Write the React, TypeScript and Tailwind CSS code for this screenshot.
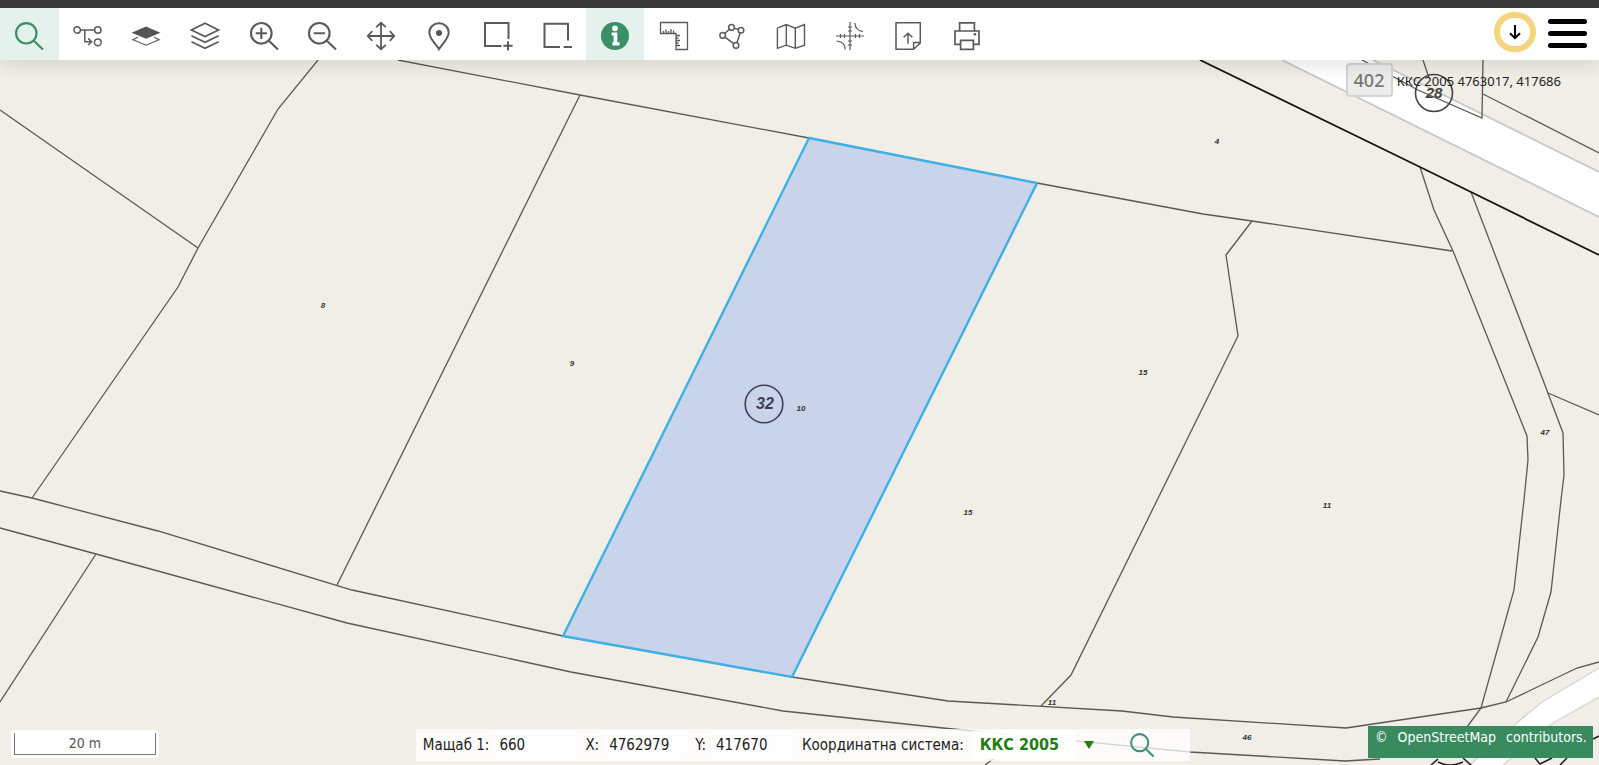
import { useState } from "react";
import type { ReactNode } from "react";

type Tool = { name: string; active?: boolean; icon: ReactNode };

const tools: Tool[] = [
  {
    name: "Търсене",
    active: true,
    icon: (
      <g stroke="#3a8f66" strokeWidth="2.2">
        <circle cx="11.3" cy="11.3" r="10.2" />
        <path d="M18.5 18.5 28 27.5" />
      </g>
    ),
  },
  {
    name: "Маршрут",
    icon: (
      <g strokeWidth="1.5">
        <circle cx="3.2" cy="8" r="3.2" />
        <circle cx="23.8" cy="8" r="3.2" />
        <circle cx="23.8" cy="20.3" r="3.4" />
        <path d="M6.5 8H20.5M10.8 8V19.7H17.6M14.2 16.4l3.4 3.3-3.4 3.3" />
      </g>
    ),
  },
  {
    name: "Основен слой",
    icon: (
      <g>
        <path d="M14 4.5 28.4 10.7 14 16.8-.4 10.7Z" fill="#555" stroke="none" />
        <path d="M6 15.3.9 17.8 14 23.2 27.1 17.8 22 15.3" strokeWidth="1.2" />
      </g>
    ),
  },
  {
    name: "Слоеве",
    icon: (
      <path
        d="M14 1.3 27.6 8 14 14.6.4 8ZM.4 13.7 14 20.2 27.6 13.7M.4 19.7 14 26.3 27.6 19.7"
        strokeWidth="1.7"
      />
    ),
  },
  {
    name: "Приближаване",
    icon: (
      <path
        d="M21.6 11.3a10.3 10.3 0 1 1-20.6 0 10.3 10.3 0 1 1 20.6 0ZM18.6 18.6 28 27.5M5.7 11.3H16.9M11.3 5.7V16.9"
        strokeWidth="2.1"
      />
    ),
  },
  {
    name: "Отдалечаване",
    icon: (
      <path
        d="M21.6 11.3a10.3 10.3 0 1 1-20.6 0 10.3 10.3 0 1 1 20.6 0ZM18.6 18.6 28 27.5M5.7 11.3H16.9"
        strokeWidth="2.1"
      />
    ),
  },
  {
    name: "Преместване",
    icon: (
      <path
        d="M14 .8V27.2M.8 14H27.2M9.2 5.2 14 .8l4.8 4.4M9.2 22.8 14 27.2l4.8-4.4M5.2 9.2.8 14l4.4 4.8M22.8 9.2 27.2 14l-4.4 4.8"
        strokeWidth="1.8"
      />
    ),
  },
  {
    name: "Местоположение",
    icon: (
      <g strokeWidth="2">
        <path d="M14 27C12.500 24 4.300 17 4.300 10.500A9.700 9.300 0 0 1 23.700 10.500C23.700 17 15.500 24 14 27Z" />
        <circle cx="14" cy="11" r="3" fill="#555" stroke="none" />
      </g>
    ),
  },
  {
    name: "Добавяне към селекция",
    icon: (
      <path
        d="M17.5 24H1V1H24.5V17M24 19.2V28.4M19.4 23.8H28.6"
        strokeWidth="2"
      />
    ),
  },
  {
    name: "Премахване от селекция",
    icon: <path d="M17 25H1.500V1.700H25V18.500M20.700 25H29" strokeWidth="2" />,
  },
  {
    name: "Информация",
    active: true,
    icon: (
      <g stroke="none">
        <circle cx="14" cy="14" r="14" fill="#3a8f66" />
        <circle cx="14" cy="6.3" r="2.9" fill="#fff" />
        <path d="M10.6 10.6H16.3V20.3H18.6V23.4H11.4V20.3H12.6V13.6H10.6Z" fill="#fff" />
      </g>
    ),
  },
  {
    name: "Измерване",
    icon: (
      <path
        d="M.5.5H27.5V27.5H16V11.5H.5ZM3.500 11.500V9M6 11.500V7.500M8.500 11.500V9M11 11.500V7M13.500 11.500V8.500M16 13.500H20M16 16H18.500M16 18.500H20M16 21H18.500M16 23.500H20"
        strokeWidth="1.3"
      />
    ),
  },
  {
    name: "Чертане на полигон",
    icon: (
      <g strokeWidth="1.5">
        <circle cx="4.7" cy="13.4" r="2.8" />
        <circle cx="13.5" cy="5.4" r="2.8" />
        <circle cx="23" cy="8.2" r="2.8" />
        <circle cx="18" cy="23.4" r="2.8" />
        <path d="M6.8 11.5 11.4 7.3M16.2 6.2 20.3 7.4M22.1 10.9 18.9 20.7M6.9 15.2 15.800 21.600" />
      </g>
    ),
  },
  {
    name: "Картни листове",
    icon: (
      <path
        d="M.4 6.200 9.300 2.600 18.300 6.200 27.500 2.600V23.200L18.300 26.300 9.300 23.200.4 26.300ZM9.300 2.600V23.200M18.300 6.200V26.300"
        strokeWidth="1.4"
      />
    ),
  },
  {
    name: "Координатна мрежа",
    icon: (
      <path
        d="M14 0V28M0 14H28M4.5 12V16M8.5 12V16M19.5 12V16M23.5 12V16M12 5H16M12 9H16M12 19H16M12 23H16M18.8 1C19.2 6 22 9 27 9.4M.5 19C6 19.4 9 22.5 9.3 27.5"
        strokeWidth="1.2"
      />
    ),
  },
  {
    name: "Експорт",
    icon: (
      <path
        d="M2 .8H26.3V21L19.6 27.2H2ZM26.3 20.6H19.6V27.2M14 21.8V11.2M9.6 15.3 14 11.2l4.4 4.1"
        strokeWidth="1.5"
      />
    ),
  },
  {
    name: "Печат",
    icon: (
      <g strokeWidth="1.7">
        <path d="M6.6 8.6V.8H21.4V8.6M7.6 22.3H2V9H26V22.3H20.4M7.6 18.3H20.4V27.3H7.6Z" />
        <circle cx="22" cy="12.2" r="1.3" fill="#555" stroke="none" />
      </g>
    ),
  },
];

const parcelLines = [
  "M0 110 198 248",
  "M318 60 278 109 198 248 178 287 32 498",
  "M398 60 580 95 809 138 1037 183 1203 214 1252 221 1452 251",
  "M580 95 337 585",
  "M0 491 32 498 158 531 352 590 563 636 792 677 948 701 1122 711 1173 717 1346 728 1481 708 1506 702 1577 668 1599 662",
  "M0 528 96 554 347 623 571 672 783 711 943 728 1190 752 1345 761 1380 759",
  "M96 554 0 702",
  "M1252 221 1226 255 1238 336 1071 675 1041 706",
  "M1420 167 1434 210 1453 251 1527 436 1528 460 1524 500 1514 590 1481 708 1467 727",
  "M1471 192 1543 380 1563 433 1564 475 1561 500 1551 592 1538 637 1506 702",
  "M1548 393 1599 415",
  "M1362 60 1418 90 1482 118 1483 60",
  "M1483 94 1599 153",
  "M1423 60 1429 78",
  "M993 759 985 765",
];

const parcelLabels = [
  { x: 323, y: 308, text: "8" },
  { x: 572, y: 366, text: "9" },
  { x: 801, y: 411, text: "10" },
  { x: 1143, y: 375, text: "15" },
  { x: 968, y: 515, text: "15" },
  { x: 1327, y: 508, text: "11" },
  { x: 1545, y: 435, text: "47" },
  { x: 1052, y: 705, text: "11" },
  { x: 1247, y: 740, text: "46" },
  { x: 1217, y: 144, text: "4" },
];

function CadastreMap() {
  return (
    <svg
      viewBox="0 60 1599 705"
      preserveAspectRatio="xMidYMid slice"
      className="absolute inset-0 h-full w-full"
      role="img"
      aria-label="Кадастрална карта"
    >
      <path d="M1282 60 1599 217V172L1373 60Z" fill="#fff" />
      <path d="M1282 60 1599 217M1373 60 1599 172" stroke="#c8c8c8" strokeWidth="1.8" />
      <path d="M1599 668 1542 702 1513 726 1470 765H1503L1553 723 1599 697Z" fill="#fff" />
      <path
        d="M1599 668 1542 702 1513 726 1470 765M1503 765 1553 723 1599 697"
        fill="none"
        stroke="#d8d5d4"
        strokeWidth="1.4"
      />
      <g fill="none" stroke="#5a5855" strokeWidth="1.3">
        {parcelLines.map((d) => (
          <path key={d} d={d} />
        ))}
      </g>
      <path d="M1200 60 1420 167 1599 255" fill="none" stroke="#161412" strokeWidth="1.8" />
      <g fill="none" stroke="#222" strokeWidth="1.6">
        <path d="M1431 765 1438 759M1463 758 1472 766M1438 762Q1450 768 1463 762" />
        <path d="M1535 758 1540 764 1552 758M1560 765 1567 758M1593 739 1599 736" />
      </g>
      <path
        d="M809 138 1037 183 792 677 563 636Z"
        fill="#c9d3e9"
        stroke="#3db0e6"
        strokeWidth="2.4"
      />
      <g
        fill="#333"
        fontFamily="Liberation Sans, sans-serif"
        fontWeight="bold"
        fontStyle="italic"
        fontSize="8"
        textAnchor="middle"
      >
        {parcelLabels.map((l) => (
          <text key={`${l.x}-${l.y}`} x={l.x} y={l.y}>
            {l.text}
          </text>
        ))}
        <g fontSize="16" fill="#3b4052">
          <text x="765" y="409">32</text>
          <text x="1434" y="98" fontSize="15" fill="#444">28</text>
        </g>
      </g>
      <circle cx="764" cy="404" r="18.8" fill="none" stroke="#3b4052" strokeWidth="1.6" />
      <circle cx="1434" cy="93" r="18.5" fill="none" stroke="#444" strokeWidth="1.6" />
      <rect x="1347" y="64" width="45" height="32" rx="3" fill="#ededed" stroke="#d4d4d4" strokeWidth="2" />
      <text
        x="1369"
        y="87"
        fontFamily="Noto Sans, sans-serif"
        fontSize="18"
        fontWeight="500"
        fill="#777"
        textAnchor="middle"
      >
        402
      </text>
    </svg>
  );
}

function Header() {
  return (
    <header className="relative z-10 flex h-[52px] shrink-0 items-stretch justify-between bg-white shadow-[0_4px_20px_rgba(0,0,0,0.12)]">
      <nav aria-label="Инструменти" className="grid w-[996px] grid-cols-17">
        {tools.map((t) => (
          <button
            key={t.name}
            type="button"
            aria-label={t.name}
            title={t.name}
            className={
              t.active
                ? "flex items-center justify-center bg-[#e5f1ed] pt-[3px]"
                : "flex items-center justify-center pt-[3px]"
            }
          >
            <svg
              viewBox="0 0 28 28"
              className="h-7 w-7 overflow-visible"
              fill="none"
              stroke="#5a5a5a"
              aria-hidden="true"
            >
              {t.icon}
            </svg>
          </button>
        ))}
      </nav>
      <div className="flex items-start gap-3 pt-1 pr-3">
        <button
          type="button"
          aria-label="Изтегляне"
          className="flex h-10 w-[42px] items-center justify-center rounded-full border-[6px] border-[#f3d57e] bg-white"
        >
          <svg viewBox="0 0 14 16" className="h-4 w-3.5" fill="none" stroke="#000" strokeWidth="2" aria-hidden="true">
            <path d="M7 1V14M2 9.200 7 14.200 12 9.200" />
          </svg>
        </button>
        <button type="button" aria-label="Меню" className="flex w-[39px] flex-col gap-[7px] pt-[7px]">
          <span className="h-[5px] w-full rounded-full bg-black" />
          <span className="h-[5px] w-full rounded-full bg-black" />
          <span className="h-[5px] w-full rounded-full bg-black" />
        </button>
      </div>
    </header>
  );
}

function StatusBar() {
  const [scale, setScale] = useState("660");
  const [x, setX] = useState("4762979");
  const [y, setY] = useState("417670");
  return (
    <form
      onSubmit={(e) => e.preventDefault()}
      className="absolute bottom-1 left-[26%] flex h-8 w-[774px] items-center bg-white/75 pl-[7px] text-[15px] text-[#222]"
    >
      <label htmlFor="scale" className="whitespace-nowrap">Мащаб 1:</label>
      <input
        id="scale"
        value={scale}
        onChange={(e) => setScale(e.target.value)}
        className="ml-1 h-7 w-[84px] bg-white/60 px-1.5 outline-none"
      />
      <label htmlFor="cx" className="ml-2">X:</label>
      <input
        id="cx"
        value={x}
        onChange={(e) => setX(e.target.value)}
        className="ml-1 h-7 w-[84px] bg-white/60 px-1.5 outline-none"
      />
      <label htmlFor="cy" className="ml-2">Y:</label>
      <input
        id="cy"
        value={y}
        onChange={(e) => setY(e.target.value)}
        className="ml-1 h-7 w-[84px] bg-white/60 px-1.5 outline-none"
      />
      <label htmlFor="crs" className="ml-2 whitespace-nowrap">Координатна система:</label>
      <select
        id="crs"
        className="ml-2 h-7 w-[104px] appearance-none bg-white/90 pl-2 text-base font-bold text-[#1f7d12] outline-none"
      >
        <option>ККС 2005</option>
      </select>
      <svg viewBox="0 0 10 8" className="ml-2 h-2 w-2.5" aria-hidden="true">
        <path d="M0 0H10L5 8Z" fill="#1f7d12" />
      </svg>
      <button type="submit" aria-label="Търси координати" className="ml-9">
        <svg viewBox="0 0 28 28" className="h-6 w-6" fill="none" stroke="#3a8f76" strokeWidth="2.4" aria-hidden="true">
          <circle cx="11.3" cy="11.3" r="10" />
          <path d="M18.5 18.5 27.5 27.5" />
        </svg>
      </button>
    </form>
  );
}

export default function App() {
  return (
    <div className="flex h-screen flex-col overflow-hidden font-['DejaVu_Sans_Condensed','DejaVu_Sans','Noto_Sans',sans-serif]">
      <div className="h-2 shrink-0 bg-[#3a3a3a]" />
      <Header />
      <main className="relative flex-1 overflow-hidden bg-[#f1eee8]">
        <CadastreMap />
        <p className="absolute top-[11px] right-[38px] font-['Noto_Sans',sans-serif] text-[13px] leading-5 text-[#222]">
          ККС 2005 4763017, 417686
        </p>
        <div className="absolute bottom-[7px] left-[11px] w-[148px] rounded bg-white p-[3px]">
          <div className="h-[22px] border border-t-0 border-[#777] text-center text-sm leading-5 text-[#555]">
            20 m
          </div>
        </div>
        <StatusBar />
        <div className="absolute right-1.5 bottom-[7px] flex h-8 w-[225px] items-start gap-[10px] bg-[#3a8a60] pt-px pl-[7px] text-sm leading-5 text-white">
          <span>©</span>
          <a href="#osm">OpenStreetMap</a>
          <span>contributors.</span>
        </div>
      </main>
    </div>
  );
}
